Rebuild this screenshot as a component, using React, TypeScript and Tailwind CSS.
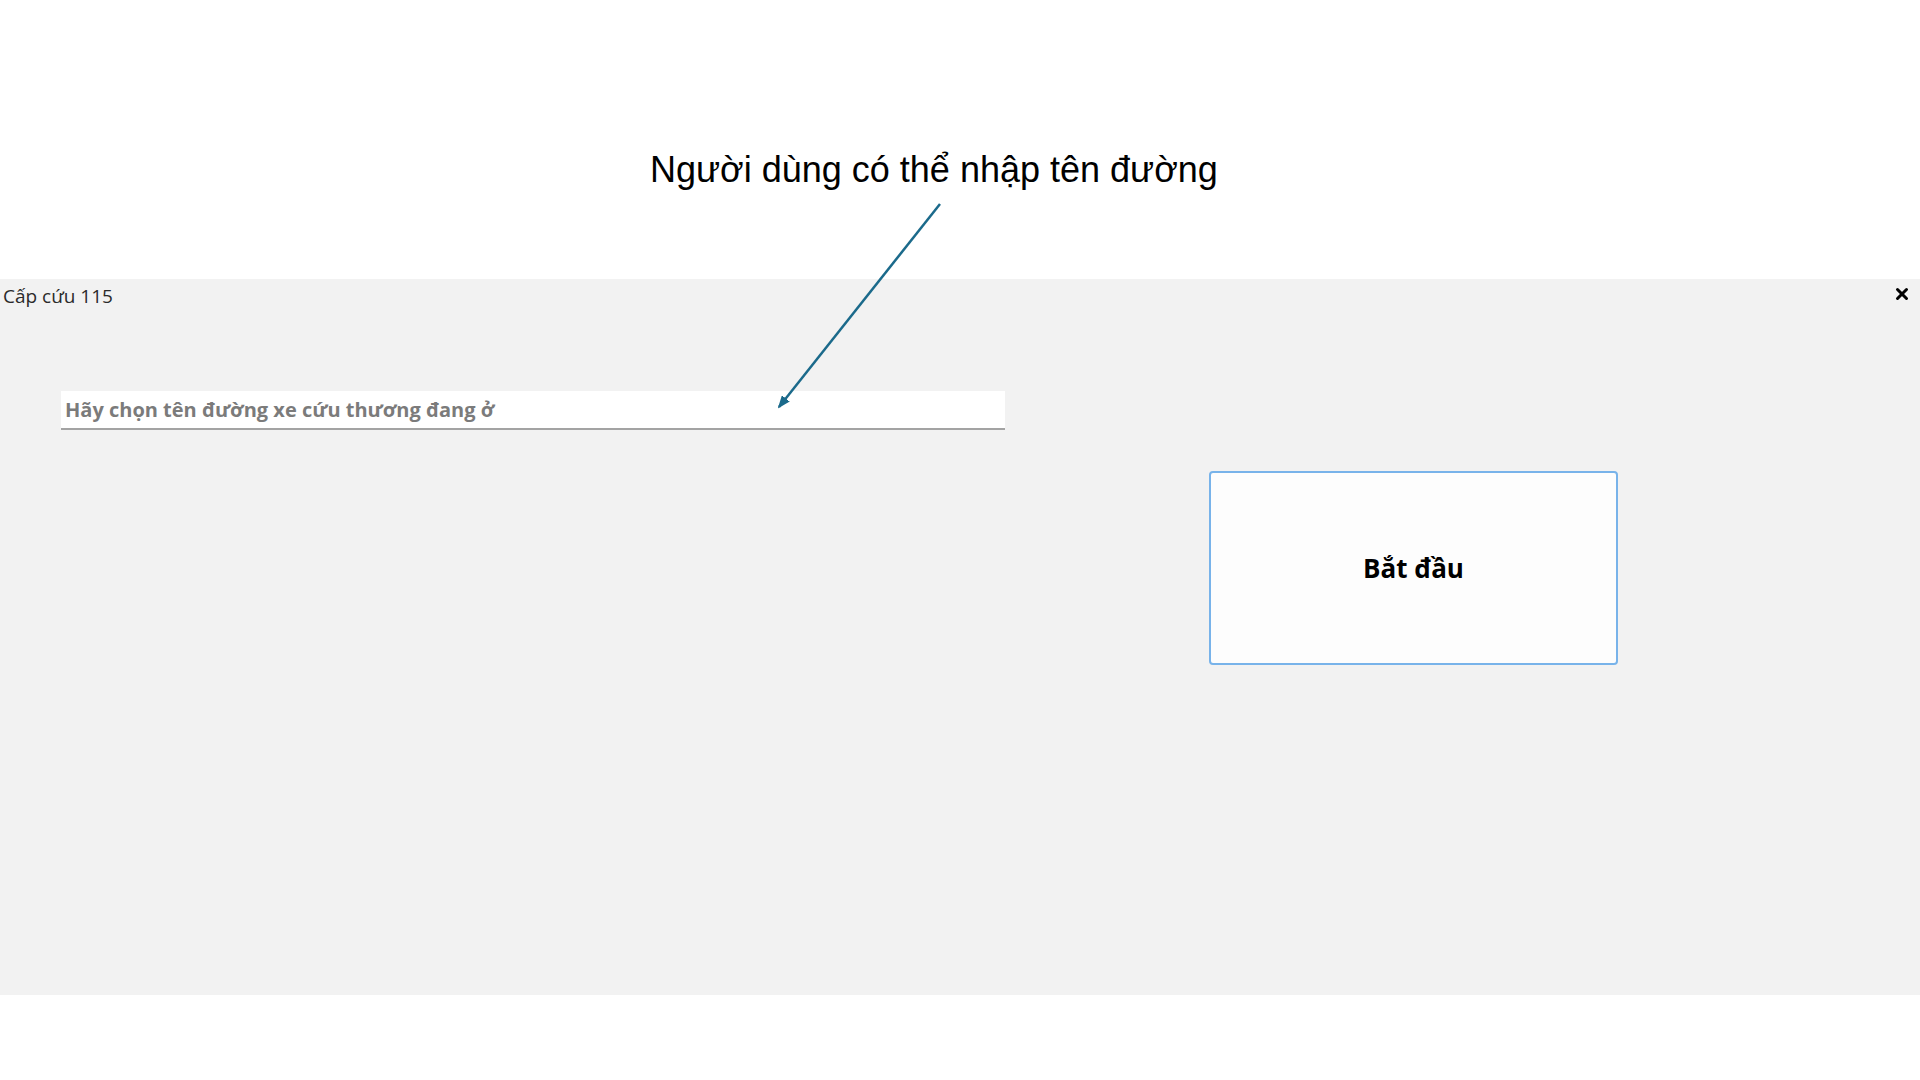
import { X } from "lucide-react";

function Arrow() {
  // callout arrow from the caption down into the search field
  return (
    <svg
      className="pointer-events-none absolute left-0 top-0"
      width={1920}
      height={1080}
      viewBox="0 0 1920 1080"
    >
      <defs>
        <marker
          id="head"
          markerWidth="13"
          markerHeight="10"
          refX="11"
          refY="5"
          orient="auto"
          markerUnits="userSpaceOnUse"
        >
          <path d="M0 0 L13 5 L0 10 Z" fill="#1b6a8b" />
        </marker>
      </defs>
      <line
        x1={940}
        y1={204}
        x2={779}
        y2={407}
        stroke="#1b6a8b"
        strokeWidth={2.5}
        markerEnd="url(#head)"
      />
    </svg>
  );
}

export default function App() {
  return (
    <div className="relative h-[1080px] w-[1920px] overflow-hidden bg-white">
      <div className="h-[279px] pl-[650px] pt-[152px]">
        <p className="text-[36px] leading-[36px] text-black [font-family:'Liberation_Sans',Arial,sans-serif]">
          Người dùng có thể nhập tên đường
        </p>
      </div>

      <div className="h-[716px] bg-[#f2f2f2] [font-family:'Open_Sans',sans-serif]">
        <div className="flex items-start justify-between pl-[3px] pr-[9px] pt-[4px]">
          <span className="text-[19px] leading-[26px] text-[#2b2b2b]">Cấp cứu 115</span>
          <X className="mt-[2px] h-[18px] w-[18px] text-black" strokeWidth={4} />
        </div>

        <div className="flex items-start">
          <div className="ml-[61px] mt-[82px] flex h-[39px] w-[944px] items-center border-b-2 border-[#a3a3a3] bg-white pl-[4px]">
            <span className="text-[20px] font-bold text-[#7b7b7b]">
              Hãy chọn tên đường xe cứu thương đang ở
            </span>
          </div>
          <button className="ml-[204px] mt-[162px] flex h-[194px] w-[409px] items-center justify-center rounded-[4px] border-2 border-[#78b3ea] bg-[#fdfdfd]">
            <span className="text-[26px] font-bold text-black">Bắt đầu</span>
          </button>
        </div>
      </div>

      <Arrow />
    </div>
  );
}
